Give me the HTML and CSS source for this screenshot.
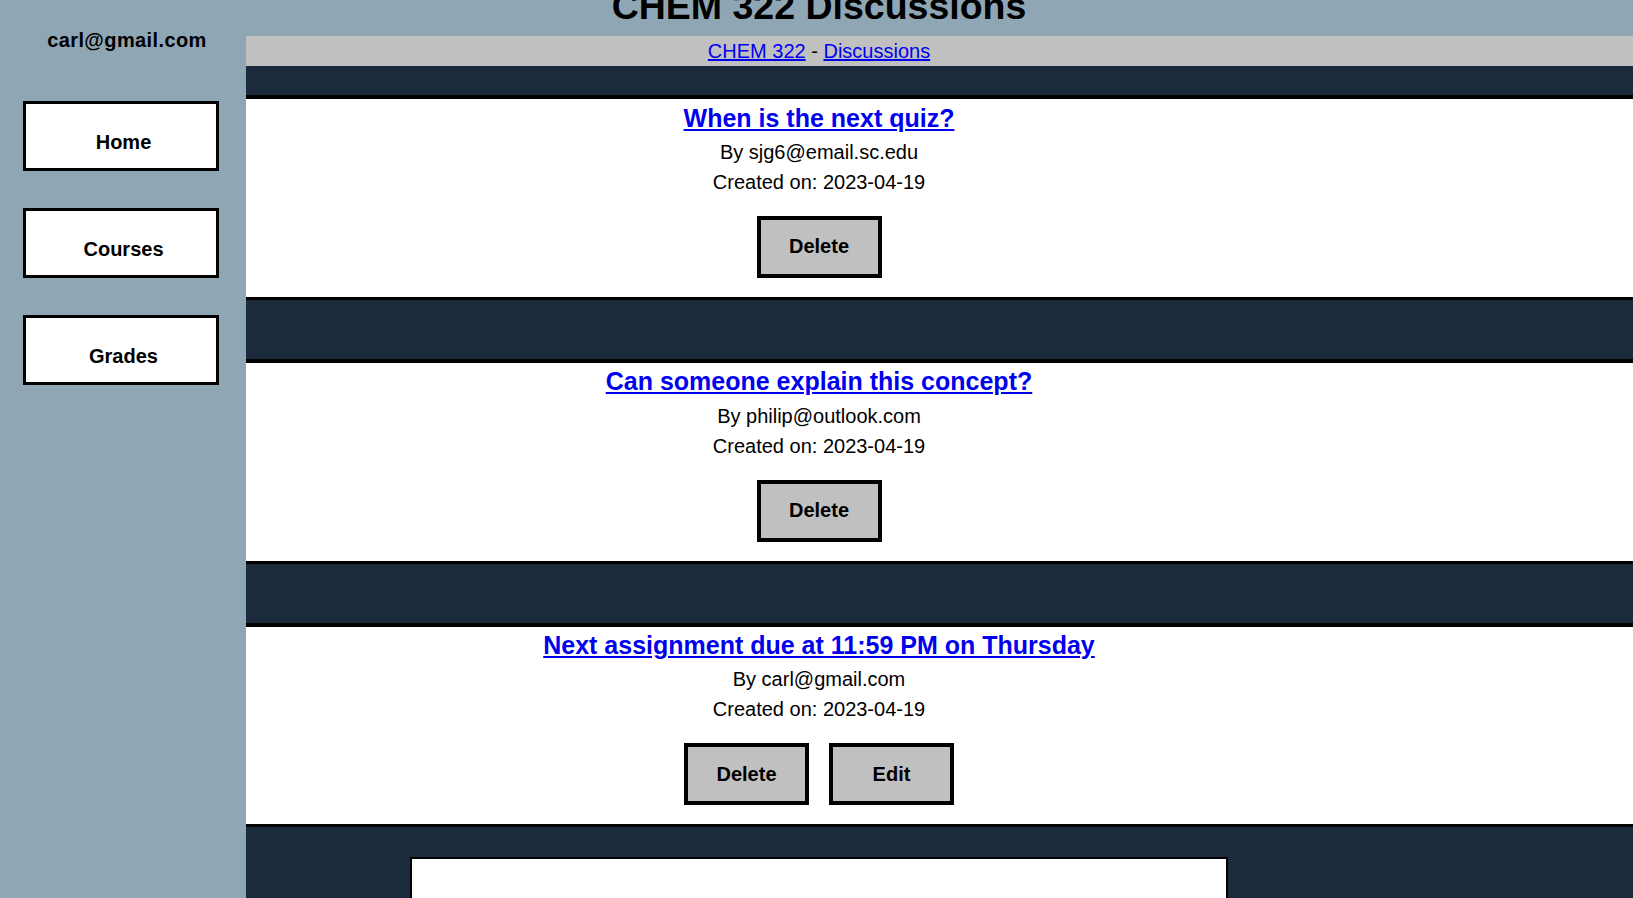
FILE: index.html
```html
<!DOCTYPE html>
<html lang="en">
<head>
<meta charset="utf-8">
<title>CHEM 322 Discussions</title>
<link rel="stylesheet" href="styles.css">
</head>
<body>
<aside class="sidebar">
  <p class="user">carl@gmail.com</p>
  <nav class="nav">
    <a class="nav-item" href="#">Home</a>
    <a class="nav-item" href="#">Courses</a>
    <a class="nav-item" href="#">Grades</a>
  </nav>
</aside>
<div class="page">
  <header class="header">
    <h1 class="title">CHEM 322 Discussions</h1>
  </header>
  <div class="crumbs"><a href="#">CHEM 322</a> - <a href="#">Discussions</a></div>
  <main class="feed">
    <div class="posts">
      <article class="post">
        <h3 class="post-title"><a href="#">When is the next quiz?</a></h3>
        <p class="post-meta">By sjg6@email.sc.edu</p>
        <p class="post-meta post-date">Created on: 2023-04-19</p>
        <div class="actions">
          <button class="btn" type="button">Delete</button>
        </div>
      </article>
      <article class="post">
        <h3 class="post-title"><a href="#">Can someone explain this concept?</a></h3>
        <p class="post-meta">By philip@outlook.com</p>
        <p class="post-meta post-date">Created on: 2023-04-19</p>
        <div class="actions">
          <button class="btn" type="button">Delete</button>
        </div>
      </article>
      <article class="post">
        <h3 class="post-title"><a href="#">Next assignment due at 11:59 PM on Thursday</a></h3>
        <p class="post-meta">By carl@gmail.com</p>
        <p class="post-meta post-date">Created on: 2023-04-19</p>
        <div class="actions">
          <button class="btn" type="button">Delete</button>
          <button class="btn" type="button">Edit</button>
        </div>
      </article>
    </div>
    <div class="composer"></div>
  </main>
</div>
</body>
</html>
```

FILE: styles.css
```css
* {
  box-sizing: border-box;
}

html, body {
  margin: 0;
  padding: 0;
}

body {
  font-family: "Liberation Sans", Arial, sans-serif;
  font-size: 20px;
  color: #000;
  background: #1b2b3c;
  overflow: hidden;
  height: 898px;
}

a {
  color: #0000ee;
}

/* Sidebar (fixed overlay on the left) */
.sidebar {
  position: fixed;
  top: 0;
  left: 0;
  bottom: 0;
  width: 246px;
  background: #8fa7b4;
  z-index: 2;
}

.user {
  margin: 0;
  padding: 29px 0 0 8px;
  font-weight: bold;
  font-size: 20px;
  line-height: 23px;
  text-align: center;
  letter-spacing: 0.4px;
}

.nav {
  margin-top: 49px;
  padding-left: 23px;
  display: flex;
  flex-direction: column;
  gap: 37px;
}

.nav-item {
  display: block;
  width: 196px;
  height: 70px;
  border: 3px solid #000;
  background: #fff;
  color: #000;
  text-decoration: none;
  font-weight: bold;
  font-size: 20px;
  line-height: 23px;
  text-align: center;
  padding: 27px 0 0 5px;
}

/* Main page */
.page {
  padding-left: 5px;
}

.header {
  display: flow-root;
  background: #8fa7b4;
  height: 36px;
  text-align: center;
}

.title {
  margin: -15.5px 0 0;
  font-size: 37.5px;
  line-height: 43px;
  font-weight: bold;
}

.crumbs {
  background: #c0c0c0;
  height: 30px;
  padding-top: 4px;
  line-height: 23px;
  text-align: center;
  font-size: 20px;
}

.feed {
  background: #1b2b3c;
  padding-top: 29px;
}

.posts {
  display: flex;
  flex-direction: column;
  gap: 59px;
}

.post {
  background: #fff;
  border-top: 4px solid #000;
  border-bottom: 3px solid #000;
  padding: 4.5px 0 19px;
  text-align: center;
}

.post-title {
  margin: 0;
  font-size: 25px;
  line-height: 28.75px;
  font-weight: bold;
}

.post-meta {
  margin: 8.5px 0 0;
  font-size: 20px;
  line-height: 23px;
}

.post-date {
  margin-top: 7px;
}

.actions {
  margin-top: 22px;
  display: flex;
  justify-content: center;
  gap: 20px;
}

.btn {
  width: 125px;
  height: 62px;
  border: 4px solid #000;
  border-radius: 0;
  background: #c0c0c0;
  color: #000;
  font-family: "Liberation Sans", Arial, sans-serif;
  font-weight: bold;
  font-size: 20px;
  padding: 0;
}

.composer {
  width: 818px;
  height: 200px;
  margin: 30px auto 0;
  background: #fff;
  border: 2px solid #000;
}
```
